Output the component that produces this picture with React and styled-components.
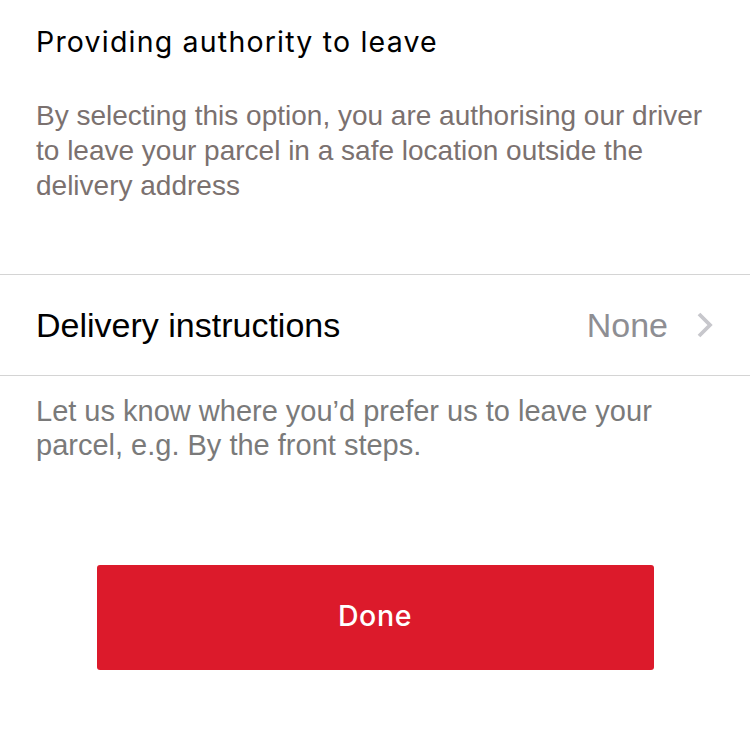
import React from 'react';
import styled, { createGlobalStyle } from 'styled-components';

const GlobalStyle = createGlobalStyle`
  body {
    margin: 0;
    background: #ffffff;
    font-family: "Liberation Sans", Arial, sans-serif;
  }
`;

const Page = styled.div`
  width: 750px;
  height: 745px;
  background: #fff;
  display: flex;
  flex-direction: column;
`;

const Section = styled.section`
  padding: 22px 36px 71px;
`;

const Heading = styled.h2`
  margin: 0;
  font-family: "Inter", "Lato", sans-serif;
  font-weight: 400;
  font-size: 28.5px;
  line-height: 40px;
  color: #000;
  letter-spacing: 1.2px;
`;

const Paragraph = styled.p`
  margin: ${p => p.$top || 0}px 0 0;
  font-size: ${p => p.$size || 28}px;
  line-height: ${p => p.$lh || 35}px;
  color: ${p => p.$color || '#7b716f'};
`;

const Row = styled.div`
  display: flex;
  align-items: center;
  height: 100px;
  padding: 0 36px;
  border-top: 1px solid #d4d4d4;
  border-bottom: 1px solid #d4d4d4;
`;

const RowLabel = styled.span`
  flex: 1;
  font-size: 34px;
  color: #000;
`;

const RowValue = styled.span`
  font-size: 34px;
  color: #8e8e93;
  margin-right: 28px;
`;

const Chevron = styled.svg`
  width: 18px;
  height: 28px;
`;

const Help = styled.div`
  padding: 18px 36px 0;
`;

const ButtonWrap = styled.div`
  display: flex;
  justify-content: center;
  margin-top: 103px;
`;

const Button = styled.button`
  width: 557px;
  height: 105px;
  padding: 0 0 5px;
  border: none;
  border-radius: 3px;
  background: #dc1a2b;
  color: #fff;
  font-family: "Inter", "Lato", sans-serif;
  font-size: 28.5px;
  font-weight: 500;
  letter-spacing: 0.6px;
  cursor: pointer;
`;

export default function App() {
  return (
    <Page>
      <GlobalStyle />
      <Section>
        <Heading>Providing authority to leave</Heading>
        <Paragraph $top={36}>
          By selecting this option, you are authorising our driver to leave your
          parcel in a safe location outside the delivery address
        </Paragraph>
      </Section>
      <Row>
        <RowLabel>Delivery instructions</RowLabel>
        <RowValue>None</RowValue>
        <Chevron viewBox="0 0 18 28">
          <path d="M3 3 L14 14 L3 25" fill="none" stroke="#c7c7cc" strokeWidth="3.8" />
        </Chevron>
      </Row>
      <Help>
        <Paragraph $size={29} $lh={34} $color="#7a7a7a">
          Let us know where you’d prefer us to leave your parcel, e.g. By the front steps.
        </Paragraph>
      </Help>
      <ButtonWrap>
        <Button>Done</Button>
      </ButtonWrap>
    </Page>
  );
}
